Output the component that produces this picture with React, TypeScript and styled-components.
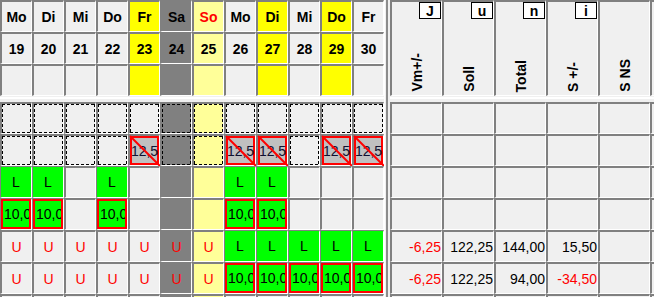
import styled, { createGlobalStyle } from "styled-components";

const GlobalStyle = createGlobalStyle`
    html, body {
        margin: 0;
        padding: 0;
        background: #f0f0f0;
        overflow: hidden;
    }
    body {
        font-family: "Liberation Sans", Arial, sans-serif;
    }
`;

const COLORS = {
    plain: "#f0f0f0",
    yellow: "#ffff00",
    gray: "#808080",
    pale: "#ffff99",
};

type Tone = keyof typeof COLORS;

const Screen = styled.div`
    display: grid;
    grid-template-columns: 384px 6px 264px;
    grid-template-rows: 96px 6px 195px;
    width: 654px;
    height: 297px;
    overflow: hidden;
    background: #f0f0f0;
`;

const DayGrid = styled.div`
    display: grid;
    grid-template-columns: repeat(12, 32px);
    grid-auto-rows: 32px;
    overflow: hidden;
`;

const SumGrid = styled.div<{ $rowHeight: number }>`
    display: grid;
    grid-template-columns: repeat(6, 52px);
    grid-auto-rows: ${p => p.$rowHeight}px;
    overflow: hidden;
`;

const VSplit = styled.div`
    grid-row: 1 / span 3;
    grid-column: 2;
    background: linear-gradient(to right, #ffffff 0 1px, #f0f0f0 1px 2px, #8c8c8c 2px 4px, #f0f0f0 4px 6px);
`;

const HSplit = styled.div`
    background: linear-gradient(to bottom, #f0f0f0 0 1px, #ffffff 1px 3px, #f0f0f0 3px 6px);
`;

const Cell = styled.div<{ $bg: string }>`
    box-sizing: border-box;
    position: relative;
    display: flex;
    align-items: center;
    justify-content: center;
    min-width: 0;
    border-top: 2px solid #808080;
    border-left: 2px solid #808080;
    border-right: 1px solid #ffffff;
    border-bottom: 1px solid #ffffff;
    background: ${p => p.$bg};
    font-size: 14px;
    color: #000;
`;

const DayText = styled.span<{ $red?: boolean }>`
    font-weight: bold;
    font-size: 14px;
    color: ${p => (p.$red ? "#ff0000" : "#000000")};
`;

// dotted frame of an open slot, 3px dash / 2px gap like the original grid
const Dashed = styled.div`
    box-sizing: border-box;
    width: 100%;
    height: 100%;
    background:
        repeating-linear-gradient(to right, #000 0 3px, transparent 3px 5px) top left / 100% 1px no-repeat,
        repeating-linear-gradient(to right, #000 0 3px, transparent 3px 5px) bottom left / 100% 1px no-repeat,
        repeating-linear-gradient(to bottom, #000 0 3px, transparent 3px 5px) top left / 1px 100% no-repeat,
        repeating-linear-gradient(to bottom, #000 0 3px, transparent 3px 5px) top right / 1px 100% no-repeat;
`;

const Planned = styled.div`
    box-sizing: border-box;
    position: relative;
    display: flex;
    align-items: center;
    justify-content: center;
    width: 100%;
    height: 100%;
    background: #c0c0c0;
    box-shadow: inset 0 0 0 2px #ff0000;
    color: #101030;
    font-size: 14px;
`;

const Strike = styled.svg`
    position: absolute;
    left: 0;
    top: 0;
    width: 100%;
    height: 100%;
    overflow: visible;
`;

const Green = styled.div<{ $framed?: boolean }>`
    box-sizing: border-box;
    display: flex;
    align-items: center;
    justify-content: ${p => (p.$framed ? "flex-start" : "center")};
    margin: -1px 0 0 -1px;
    width: calc(100% + 1px);
    height: calc(100% + 1px);
    padding-left: ${p => (p.$framed ? "1px" : "0")};
    background: #00ff00;
    border: ${p => (p.$framed ? "2px solid #ff0000" : "none")};
    overflow: hidden;
    white-space: nowrap;
    font-size: 14px;
    color: #000;
`;

const Absent = styled.span`
    color: #ff0000;
    font-size: 14px;
`;

const HeadCell = styled(Cell)`
    flex-direction: column;
    justify-content: space-between;
    align-items: center;
    padding-bottom: 3px;
`;

const KeyBox = styled.div`
    box-sizing: border-box;
    align-self: flex-end;
    display: flex;
    align-items: center;
    justify-content: center;
    width: 22px;
    height: 17px;
    border: 1px solid #000;
    background: #ffffff;
    font-weight: bold;
    font-size: 14px;
`;

const Spacer = styled.div`
    height: 17px;
`;

const VerticalLabel = styled.div`
    writing-mode: vertical-rl;
    transform: rotate(180deg);
    font-weight: bold;
    font-size: 14px;
    white-space: nowrap;
`;

const ValueCell = styled(Cell)<{ $neg?: boolean }>`
    justify-content: flex-end;
    padding-right: 0;
    color: ${p => (p.$neg ? "#ff0000" : "#000000")};
`;

const days: { name: string; num: number; tone: Tone; red?: boolean }[] = [
    { name: "Mo", num: 19, tone: "plain" },
    { name: "Di", num: 20, tone: "plain" },
    { name: "Mi", num: 21, tone: "plain" },
    { name: "Do", num: 22, tone: "plain" },
    { name: "Fr", num: 23, tone: "yellow" },
    { name: "Sa", num: 24, tone: "gray" },
    { name: "So", num: 25, tone: "pale", red: true },
    { name: "Mo", num: 26, tone: "plain" },
    { name: "Di", num: 27, tone: "yellow" },
    { name: "Mi", num: 28, tone: "plain" },
    { name: "Do", num: 29, tone: "yellow" },
    { name: "Fr", num: 30, tone: "plain" },
];

// column tone in the lower grid: only weekend keeps its colour
const bodyTone = (i: number): Tone => (i === 5 ? "gray" : i === 6 ? "pale" : "plain");

// d = dashed, x = planned 12,5 (struck), L = leave, H = 10,0 booked, U = absent, _ = empty
const rows: string[] = [
    "dddddddddddd",
    "ddddxddxxdxx",
    "LL_L___LL___",
    "HH_H___HH___",
    "UUUUUUULLLLL",
    "UUUUUUUHHHHH",
    "____________",
];

const sumHeads = [
    { key: "J", label: "Vm+/-" },
    { key: "u", label: "Soll" },
    { key: "n", label: "Total" },
    { key: "i", label: "S +/-" },
    { key: "", label: "S NS" },
    { key: "", label: "" },
];

const sums: (string | null)[][] = [
    [null, null, null, null, null, null],
    [null, null, null, null, null, null],
    [null, null, null, null, null, null],
    [null, null, null, null, null, null],
    ["-6,25", "122,25", "144,00", "15,50", null, null],
    ["-6,25", "122,25", "94,00", "-34,50", null, null],
    [null, null, null, null, null, null],
];

function Token({ code }: { code: string }) {
    switch (code) {
        case "d":
            return <Dashed />;
        case "x":
            return (
                <Planned>
                    12,5
                    <Strike viewBox="0 0 29 29" preserveAspectRatio="none">
                        <line x1="0" y1="0" x2="30" y2="30" stroke="#ff0000" strokeWidth="2" />
                    </Strike>
                </Planned>
            );
        case "L":
            return <Green>L</Green>;
        case "H":
            return <Green $framed>10,0</Green>;
        case "U":
            return <Absent>U</Absent>;
        default:
            return null;
    }
}

export default function App() {
    return (
        <>
            <GlobalStyle />
            <Screen>
                <DayGrid>
                    {days.map((d, i) => (
                        <Cell key={"n" + i} $bg={COLORS[d.tone]}>
                            <DayText $red={d.red}>{d.name}</DayText>
                        </Cell>
                    ))}
                    {days.map((d, i) => (
                        <Cell key={"d" + i} $bg={COLORS[d.tone]}>
                            <DayText>{d.num}</DayText>
                        </Cell>
                    ))}
                    {days.map((d, i) => (
                        <Cell key={"e" + i} $bg={COLORS[d.tone]} />
                    ))}
                </DayGrid>
                <VSplit />
                <SumGrid $rowHeight={96}>
                    {sumHeads.map((h, i) => (
                        <HeadCell key={i} $bg={COLORS.plain}>
                            {h.key ? <KeyBox>{h.key}</KeyBox> : <Spacer />}
                            <VerticalLabel>{h.label}</VerticalLabel>
                        </HeadCell>
                    ))}
                </SumGrid>
                <HSplit />
                <HSplit />
                <DayGrid>
                    {rows.map((row, r) =>
                        row.split("").map((code, c) => (
                            <Cell key={r + "-" + c} $bg={COLORS[bodyTone(c)]}>
                                <Token code={code} />
                            </Cell>
                        ))
                    )}
                </DayGrid>
                <SumGrid $rowHeight={32}>
                    {sums.map((row, r) =>
                        row.map((v, c) => (
                            <ValueCell key={r + "-" + c} $bg={COLORS.plain} $neg={!!v && v.startsWith("-")}>
                                {v}
                            </ValueCell>
                        ))
                    )}
                </SumGrid>
            </Screen>
        </>
    );
}
